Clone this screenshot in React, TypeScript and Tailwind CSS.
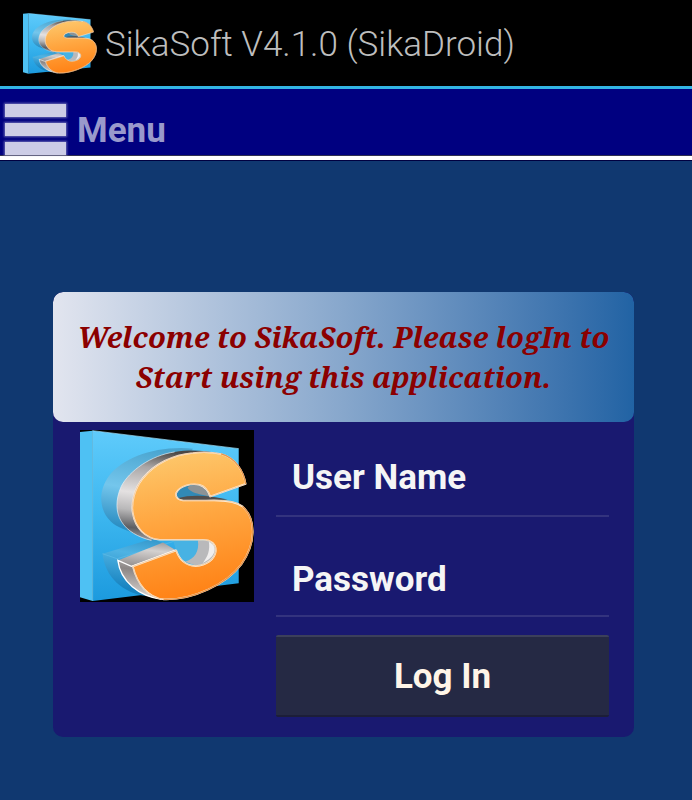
import { useId } from "react";

const S_FRONT =
  "M559 190C552 150 528 112 485 100C455 94 425 94 400 97C340 102 285 130 250 172C222 206 214 250 219 278C226 322 256 354 300 358L430 358C456 358 470 372 469 392C466 418 440 434 408 437C378 437 358 416 350 390L219 438C232 492 266 532 312 537C400 540 500 492 546 432C590 370 592 296 550 258C524 238 480 238 440 240L378 240C356 240 346 230 350 217C360 196 396 187 420 193C440 199 447 214 452 228Z";

function SikaLogo({ className }: { className: string }) {
  const id = useId();
  const panel = `${id}-panel`;
  const orange = `${id}-orange`;
  const metal = `${id}-metal`;
  const ghost = `${id}-ghost`;
  return (
    <svg viewBox="60 28 524 517" preserveAspectRatio="none" className={className} role="img" aria-label="SikaSoft">
      <defs>
        <linearGradient id={panel} x1="0" y1="0" x2="0" y2="1">
          <stop offset="0" stopColor="#5fcbfb" />
          <stop offset="0.5" stopColor="#3cb6ef" />
          <stop offset="1" stopColor="#1c9ade" />
        </linearGradient>
        <linearGradient id={orange} x1="0" y1="0" x2="0.15" y2="1">
          <stop offset="0" stopColor="#fdcb70" />
          <stop offset="0.5" stopColor="#ffa640" />
          <stop offset="1" stopColor="#ff8418" />
        </linearGradient>
        <linearGradient id={metal} gradientUnits="userSpaceOnUse" x1="300" y1="90" x2="250" y2="530">
          <stop offset="0" stopColor="#4c4744" />
          <stop offset="0.12" stopColor="#aaa6a6" />
          <stop offset="0.3" stopColor="#e4e1e1" />
          <stop offset="0.42" stopColor="#b9b8b9" />
          <stop offset="0.54" stopColor="#5d5e62" />
          <stop offset="0.68" stopColor="#d4d1d0" />
          <stop offset="0.82" stopColor="#8b8685" />
          <stop offset="1" stopColor="#d8d2ce" />
        </linearGradient>
        <linearGradient id={ghost} gradientUnits="userSpaceOnUse" x1="250" y1="80" x2="180" y2="500">
          <stop offset="0" stopColor="#4aa5d0" />
          <stop offset="0.3" stopColor="#74c6ec" />
          <stop offset="0.58" stopColor="#2b8dc2" />
          <stop offset="0.75" stopColor="#4fb3e3" />
          <stop offset="1" stopColor="#1883c0" />
        </linearGradient>
      </defs>
      <path d="M60 28H584V545H60Z" fill="#000" />
      <path d="M60 34L98 30V542L60 531Z" fill="#4ec1f3" />
      <path d="M98 30L538 84V489L98 542Z" fill={`url(#${panel})`} />
      <path d="M98 30L538 84" stroke="#a5e5ff" strokeWidth="2" />
      <path d="M98 30V542" stroke="#79d5fb" strokeWidth="2" />
      <path
        d="M400 84C290 74 190 110 146 168C112 216 120 272 152 302C170 320 205 332 245 345L290 250Z"
        fill={`url(#${ghost})`}
      />
      <path d="M128 400L280 354L350 388L219 438C222 480 240 510 262 527C190 520 135 470 128 400Z" fill={`url(#${ghost})`} />
      <path d="M128 400L172 415L345 362" fill="none" stroke="#5dbce8" strokeWidth="2" />
      <path
        d="M475 98C430 88 385 88 345 94C275 104 208 150 184 198C166 238 168 276 184 302C202 332 235 350 275 360L340 260Z"
        fill={`url(#${metal})`}
      />
      <path
        d="M345 94C275 104 208 150 184 198C166 238 168 276 184 302C202 332 235 350 275 360"
        fill="none"
        stroke="#e8f2f7"
        strokeWidth="2"
      />
      <path d="M174 420L310 366L350 390L219 438C230 490 262 530 306 537C238 528 182 484 174 420Z" fill={`url(#${metal})`} />
      <path d="M306 537C238 528 182 484 174 420L215 438L350 388" fill="none" stroke="#fff" strokeWidth="4" />
      <path d="M350 238C342 210 372 188 414 192C438 198 447 214 452 228L500 238Z" fill="#3189b6" />
      <path d="M384 200C398 190 420 192 434 202L452 228L420 221C400 216 388 210 384 200Z" fill="#8c9295" />
      <path d="M352 233C400 220 450 225 505 237L440 241H378Z" fill="#514d4c" />
      <path d="M340 360H430C466 360 480 388 455 416C430 440 388 440 364 418L350 390Z" fill="#47b2e3" />
      <path d="M415 360C455 355 474 376 468 397C462 420 437 433 408 435L376 424C405 416 420 392 415 360Z" fill="#b9b9bb" />
      <path d="M448 364C478 378 468 410 430 428C445 408 452 390 448 364Z" fill="#f0eeee" />
      <path d={S_FRONT} fill={`url(#${orange})`} stroke="#fff1df" strokeWidth="5" strokeLinejoin="round" />
      <path d={S_FRONT} fill="none" stroke="#d58335" strokeWidth="1" strokeLinejoin="round" />
      <path
        d="M559 190C552 150 528 112 485 100M546 432C590 370 592 296 550 258M312 537C400 540 500 492 546 432"
        fill="none"
        stroke="#e8954a"
        strokeWidth="4"
      />
    </svg>
  );
}

const fieldClass =
  "block w-full border-b-2 border-[#33337e] bg-transparent px-4 font-[Roboto,sans-serif] text-[35px] font-bold text-[#f5f5f5] outline-none placeholder:text-[#f5f5f5] placeholder:opacity-100";

export default function App() {
  return (
    <div className="min-h-screen bg-[#103870] font-[Roboto,sans-serif]">
      <header className="flex h-[89px] items-center gap-2 border-b-[3px] border-[#33b5e5] bg-black pl-[23px]">
        <SikaLogo className="h-[61px] w-[74px]" />
        <h1 className="whitespace-nowrap pt-1 text-[35px] font-light text-[#bebebe]">SikaSoft V4.1.0 (SikaDroid)</h1>
      </header>

      <nav className="h-[72px] border-b border-[#000040] bg-[#000080]">
        <div className="h-[71px] border-b-4 border-white">
          <button type="button" className="flex h-[67px] w-full items-end gap-[11px] border-b border-[#303050] pl-[5px] text-left">
            <span className="flex flex-col gap-[6px]">
              <span className="h-[13px] w-[61px] bg-[#cccce6] shadow-[0_0_2px_1px_#cccce680]" />
              <span className="h-[13px] w-[61px] bg-[#cccce6] shadow-[0_0_2px_1px_#cccce680]" />
              <span className="h-[13px] w-[61px] bg-[#cccce6] shadow-[0_0_2px_1px_#cccce680]" />
            </span>
            <span className="text-[35px] leading-[48px] font-bold text-[#9999cc]">Menu</span>
          </button>
        </div>
      </nav>

      <main className="pt-[131px] pr-[58px] pl-[53px]">
        <section className="overflow-hidden rounded-[10px] bg-[#191970] pb-5">
          <h2 className="rounded-[10px] bg-linear-to-r from-[#e2e5ef] via-[#87a7cc] to-[#2163a4] px-4 py-[25px] text-center font-['Noto_Serif','DejaVu_Serif_Condensed','DejaVu_Serif',serif] text-[29px] leading-10 font-bold text-[#8b0000] italic">
            Welcome to SikaSoft. Please logIn to Start using this application.
          </h2>
          <div className="flex items-start gap-[22px] pt-2 pr-[25px] pl-[27px]">
            <SikaLogo className="h-[172px] w-[174px] shrink-0" />
            <form className="min-w-0 flex-1" onSubmit={(e) => e.preventDefault()}>
              <input aria-label="User Name" type="text" placeholder="User Name" className={`${fieldClass} h-[87px] pt-[10px]`} />
              <input aria-label="Password" type="password" placeholder="Password" className={`${fieldClass} h-[100px] pt-[26px]`} />
              <button
                type="submit"
                className="mt-[18px] h-[82px] w-full rounded-xs border-t-2 border-b-2 border-t-[#3c405a] border-b-[#1c1e38] bg-[#252944] pt-[2px] text-[35px] font-bold text-[#fff5e8]"
              >
                Log In
              </button>
            </form>
          </div>
        </section>
      </main>
    </div>
  );
}
